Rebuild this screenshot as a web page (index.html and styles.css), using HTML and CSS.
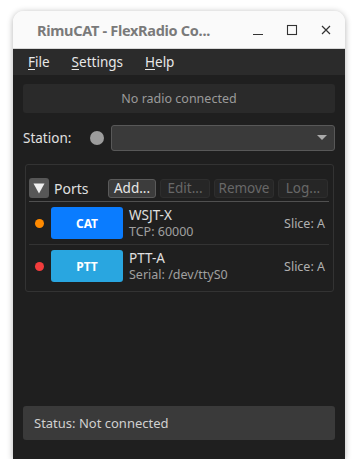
FILE: index.html
```html
<!DOCTYPE html>
<html lang="en">
<head>
    <meta charset="UTF-8">
    <meta name="viewport" content="width=device-width, initial-scale=1.0">
    <title>RimuCAT</title>
    <link rel="stylesheet" href="styles.css">
</head>
<body>

    <div class="window">
        <div class="titlebar">
            <span class="title">RimuCAT - FlexRadio Co...</span>
            <div class="controls">
                <svg width="14" height="14" viewBox="0 0 14 14"><path d="M2 11.5h10" stroke="#333" stroke-width="1.2"/></svg>
                <svg width="14" height="14" viewBox="0 0 14 14"><rect x="2.5" y="2.5" width="9" height="9" fill="none" stroke="#333" stroke-width="1.1"/></svg>
                <svg width="14" height="14" viewBox="0 0 14 14"><path d="M3 3l8 8M11 3l-8 8" stroke="#333" stroke-width="1.2"/></svg>
            </div>
        </div>

        <div class="menubar">
            <span><u>F</u>ile</span>
            <span><u>S</u>ettings</span>
            <span><u>H</u>elp</span>
        </div>

        <div class="content">
            <div class="radio-box">No radio connected</div>

            <div class="station-row">
                <label>Station:</label>
                <span class="led"></span>
                <div class="combo">
                    <svg width="10" height="6" viewBox="0 0 10 6"><path d="M0 0h10L5 5z" fill="#aaa"/></svg>
                </div>
            </div>

            <div class="group">
                <div class="ports-head">
                    <span class="toggle">
                        <svg width="12" height="12" viewBox="0 0 12 12"><path d="M0.5 1.5h11L6 11.5z" fill="#f0f0f0"/></svg>
                    </span>
                    <span class="ports-label">Ports</span>
                    <button class="btn">Add...</button>
                    <button class="btn" disabled>Edit...</button>
                    <button class="btn wide" disabled>Remove</button>
                    <button class="btn" disabled>Log...</button>
                </div>

                <div class="port">
                    <span class="dot orange"></span>
                    <span class="badge cat">CAT</span>
                    <div class="port-info">
                        <div class="port-name">WSJT-X</div>
                        <div class="port-detail">TCP: 60000</div>
                    </div>
                    <span class="slice">Slice: A</span>
                </div>

                <div class="port">
                    <span class="dot red"></span>
                    <span class="badge ptt">PTT</span>
                    <div class="port-info">
                        <div class="port-name">PTT-A</div>
                        <div class="port-detail">Serial: /dev/ttyS0</div>
                    </div>
                    <span class="slice">Slice: A</span>
                </div>
            </div>

            <div class="status">Status: Not connected</div>
        </div>
    </div>

</body>
</html>
```

FILE: styles.css
```css
body {
    margin: 0;
    background-color: #ffffff;
    font-family: "Noto Sans", "Open Sans", sans-serif;
    padding: 11px 0 0 13px;
}

.window {
    width: 332px;
    height: 448px;
    display: flex;
    flex-direction: column;
    border-radius: 11px 11px 0 0;
    overflow: hidden;
    box-shadow: 0 1px 6px rgba(0, 0, 0, 0.3);
}

.titlebar {
    height: 37px;
    background-color: #fafafa;
    border-bottom: 1px solid #d8d8d8;
    display: flex;
    align-items: center;
    padding: 0 0 0 24px;
}

.title {
    font-size: 14.5px;
    font-weight: bold;
    color: #7a7a7a;
    letter-spacing: -0.3px;
    flex: 1;
}

.controls {
    display: flex;
    gap: 20px;
    padding-right: 12px;
}

.menubar {
    height: 26px;
    background-color: #2b2b2b;
    display: flex;
    align-items: center;
    gap: 22px;
    padding-left: 15px;
    font-size: 13.5px;
    color: #e8e8e8;
}

.menubar u {
    text-underline-offset: 2px;
}

.content {
    flex: 1;
    background-color: #1f1f1f;
    padding: 9px 10px 19px 10px;
    display: flex;
    flex-direction: column;
}

.radio-box {
    height: 29px;
    background-color: #2a2a2a;
    border-radius: 3px;
    color: #9a9a9a;
    font-size: 12.5px;
    display: flex;
    align-items: center;
    justify-content: center;
}

.station-row {
    display: flex;
    align-items: center;
    margin-top: 12px;
    height: 26px;
}

.station-row label {
    color: #e0e0e0;
    font-size: 13.5px;
    width: 67px;
}

.led {
    width: 14px;
    height: 14px;
    border-radius: 50%;
    background-color: #9c9c9c;
    margin-right: 7px;
}

.combo {
    flex: 1;
    height: 24px;
    background-color: #3a3a3a;
    border: 1px solid #585858;
    border-radius: 3px;
    display: flex;
    align-items: center;
    justify-content: flex-end;
    padding-right: 7px;
}

.group {
    margin: 13px 1px 0 2px;
    border: 1px solid #333333;
    border-radius: 3px;
    padding: 13px 4px 4px 3px;
}

.ports-head {
    display: flex;
    align-items: center;
    gap: 4px;
    padding-bottom: 3px;
    border-bottom: 1px solid #505050;
}

.toggle {
    width: 20px;
    height: 20px;
    background-color: #575757;
    border-radius: 3px;
    display: flex;
    align-items: center;
    justify-content: center;
}

.ports-label {
    color: #e0e0e0;
    font-size: 14px;
    width: 50px;
    padding-left: 1px;
}

.btn {
    height: 19px;
    padding: 0;
    font-family: "Noto Sans", sans-serif;
    font-size: 13.5px;
    line-height: 17px;
    background-color: #3c3c3c;
    color: #e8e8e8;
    border: 1px solid #5a5a5a;
    border-radius: 3px;
    width: 48px;
}

.btn:disabled {
    background-color: #262626;
    color: #686868;
    border-color: #2e2e2e;
    width: 50px;
}

.btn.wide {
    width: 60px;
}

.port {
    display: flex;
    align-items: center;
    height: 42px;
    border-bottom: 1px solid #333333;
}

.port:last-child {
    border-bottom: none;
}

.dot {
    width: 9px;
    height: 9px;
    border-radius: 50%;
    margin: 0 7px 0 6px;
}

.orange {
    background-color: #ff8a00;
}

.red {
    background-color: #f23c3c;
}

.badge {
    width: 72px;
    height: 32px;
    border-radius: 3px;
    color: #ffffff;
    font-size: 12px;
    font-weight: bold;
    display: flex;
    align-items: center;
    justify-content: center;
}

.cat {
    background-color: #0a7cff;
}

.ptt {
    background-color: #29a6e0;
}

.port-info {
    flex: 1;
    padding-left: 6px;
}

.port-name {
    color: #e0e0e0;
    font-size: 13.5px;
    line-height: 17px;
}

.port-detail {
    color: #a0a0a0;
    font-size: 12.5px;
    line-height: 16px;
}

.slice {
    color: #b0b0b0;
    font-size: 12.5px;
    padding-right: 4px;
}

.status {
    margin-top: auto;
    height: 34px;
    background-color: #3a3a3a;
    border-radius: 3px;
    color: #d0d0d0;
    font-size: 13px;
    display: flex;
    align-items: center;
    padding-left: 11px;
}
```
